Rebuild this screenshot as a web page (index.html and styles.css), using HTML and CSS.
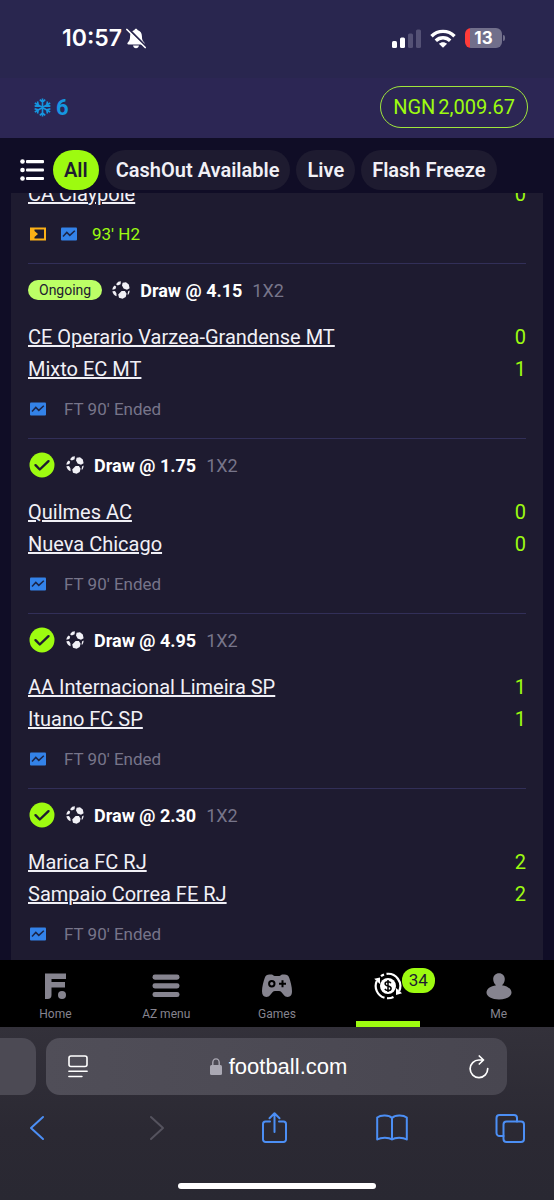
FILE: index.html
```
<!DOCTYPE html>
<html lang="en">
<head>
<meta charset="utf-8">
<meta name="viewport" content="width=device-width, initial-scale=1">
<title>football.com – My bets</title>
<link rel="stylesheet" href="styles.css">
</head>
<body>
<svg class="defs" aria-hidden="true">
  <symbol id="ball" viewBox="0 0 18 18">
    <path fill="currentColor" d="M6.200.7 8.900.2 8.600 3.200 5.800 4.600 4 3.200zM10.600 1.800 14 1.200 16.800 3.600 17.600 7.200 15 8.800 11.600 7.600 10 4.600zM2.800 4.400 4.200 5.700 3.400 8 .4 8.800C.4 7 1.400 5.200 2.800 4.400zM.4 10.200 3 10 4.400 12.200 4.600 15.200C2.200 14.600.6 12.400.4 10.200zM9.600 10 12.900 9.900 14.600 12.800 13.700 16 10.600 17.800 7 16.800 6.200 13.400zM16.200 10.300 17.600 9.600C17.600 11.600 16.900 13.200 15.800 14.200L15.700 12.200z"/>
  </symbol>
  <symbol id="chart" viewBox="0 0 16 14">
    <rect width="16" height="13" y=".5" rx="1" fill="#3382e8"/>
    <path d="M2 9.500 5.800 5.400 8.800 8.400 13.800 3.800" fill="none" stroke="#1c2547" stroke-width="1.500"/>
  </symbol>
  <symbol id="check" viewBox="0 0 26 26">
    <circle cx="13" cy="13" r="12.500" fill="#9dfb10"/>
    <path d="M6.500 13.200l4.300 4.300L19.500 9.200" fill="none" stroke="#1e1b30" stroke-width="2.400" stroke-linecap="round" stroke-linejoin="round"/>
  </symbol>
</svg>

<div class="statusbar">
  <div class="clock">
    <span>10:57</span>
    <svg width="20" height="21" viewBox="0 0 20 21" aria-label="Silent">
      <path fill="#fff" d="M10 .8c-.9 0-1.400.6-1.500 1.200C5.500 2.800 4.200 5.200 4.100 8.100c0 3.200-.7 5-2.300 6.400-.8.8-.5 2 .7 2h15c1.200 0 1.500-1.200.7-2-1.600-1.400-2.300-3.200-2.300-6.400-.1-2.900-1.400-5.300-4.400-6.100C11.400 1.400 10.900.8 10 .8zM7 17.600h6c-.3 1.600-1.400 2.600-3 2.600s-2.700-1-3-2.600z"/>
      <path d="M1.500 0 20 18.500" stroke="#29264f" stroke-width="2.200"/>
      <path d="M.9 1.500 19.200 19.500" stroke="#fff" stroke-width="1.700" stroke-linecap="round"/>
    </svg>
  </div>
  <div class="signals">
    <svg width="29" height="19" viewBox="0 0 29 19" aria-label="Signal">
      <rect x="0" y="12" width="5" height="7" rx="1.500" fill="#fff"/>
      <rect x="8" y="8.500" width="5" height="10.500" rx="1.500" fill="#fff"/>
      <rect x="16" y="4.500" width="5" height="14.500" rx="1.500" fill="#545175"/>
      <rect x="24" y="0.500" width="5" height="18.500" rx="1.500" fill="#545175"/>
    </svg>
    <svg width="26" height="19" viewBox="0 0 26 19" aria-label="Wi-Fi">
      <g fill="none" stroke="#fff" stroke-width="3.400">
        <path d="M1.500 7.200c6.300-6.400 16.700-6.400 23 0"/>
        <path d="M5.800 11.700c4-4 10.400-4 14.400 0"/>
      </g>
      <path fill="#fff" d="M8.900 14.800c2.300-2.200 5.900-2.200 8.200 0L13 18.800z"/>
    </svg>
    <span class="battery">13</span>
  </div>
</div>

<header class="topbar">
  <div class="freeze">
    <svg width="17" height="19" viewBox="0 0 17 19" fill="none" stroke="#1596e0" stroke-width="1.600" aria-hidden="true">
      <path d="M8.500.5v18M.8 5l15.400 9M16.200 5 .8 14M5.800 1.600l2.700 2.600 2.700-2.600M5.800 17.400l2.700-2.600 2.700 2.600M.6 8.200l3.700-1.100-.8-3.600M16.400 10.800l-3.700 1.100.8 3.600M16.400 8.200l-3.700-1.100.8-3.600M.6 10.800l3.700 1.100-.8 3.600"/>
    </svg>
    <span>6</span>
  </div>
  <a class="balance" href="#"><span>NGN</span><span>2,009.67</span></a>
</header>

<nav class="filters" aria-label="Bet filters">
  <button class="list-toggle" aria-label="List view">
    <svg width="24" height="22" viewBox="0 0 24 22" fill="#fff">
      <circle cx="2.500" cy="2.500" r="2.300"/><circle cx="2.500" cy="11" r="2.300"/><circle cx="2.500" cy="19.500" r="2.300"/>
      <rect x="6" y="1" width="18" height="3.200" rx="1"/><rect x="6" y="9.400" width="18" height="3.200" rx="1"/><rect x="6" y="17.900" width="18" height="3.200" rx="1"/>
    </svg>
  </button>
  <button class="chip chip-active">All</button>
  <button class="chip">CashOut Available</button>
  <button class="chip">Live</button>
  <button class="chip">Flash Freeze</button>
</nav>

<main class="panel">
  <div class="bets">
    <section class="bet">
      <div class="team"><a href="#">CA Claypole</a><span>0</span></div>
      <div class="state state-live">
        <svg width="16" height="14" viewBox="0 0 16 14" aria-hidden="true">
          <rect x="1" y="1.500" width="14" height="11" fill="none" stroke="#fbb016" stroke-width="2"/>
          <path d="M1 1h3.500v3L8 7l-3.500 3v3H1z" fill="#fbb016"/>
        </svg>
        <svg width="16" height="14" aria-hidden="true"><use href="#chart"/></svg>
        <span>93' H2</span>
      </div>
    </section>

    <section class="bet">
      <div class="pick"><span class="ongoing">Ongoing</span><svg width="18" height="18" aria-hidden="true"><use href="#ball"/></svg><strong>Draw @ 4.15</strong><span class="market">1X2</span></div>
      <div class="team"><a href="#">CE Operario Varzea-Grandense MT</a><span>0</span></div>
      <div class="team"><a href="#">Mixto EC MT</a><span>1</span></div>
      <div class="state"><svg width="16" height="14" aria-hidden="true"><use href="#chart"/></svg><span>FT 90' Ended</span></div>
    </section>

    <section class="bet">
      <div class="pick"><svg class="won" width="28" height="26" aria-label="Won"><use href="#check"/></svg><svg width="18" height="18" aria-hidden="true"><use href="#ball"/></svg><strong>Draw @ 1.75</strong><span class="market">1X2</span></div>
      <div class="team"><a href="#">Quilmes AC</a><span>0</span></div>
      <div class="team"><a href="#">Nueva Chicago</a><span>0</span></div>
      <div class="state"><svg width="16" height="14" aria-hidden="true"><use href="#chart"/></svg><span>FT 90' Ended</span></div>
    </section>

    <section class="bet">
      <div class="pick"><svg class="won" width="28" height="26" aria-label="Won"><use href="#check"/></svg><svg width="18" height="18" aria-hidden="true"><use href="#ball"/></svg><strong>Draw @ 4.95</strong><span class="market">1X2</span></div>
      <div class="team"><a href="#">AA Internacional Limeira SP</a><span>1</span></div>
      <div class="team"><a href="#">Ituano FC SP</a><span>1</span></div>
      <div class="state"><svg width="16" height="14" aria-hidden="true"><use href="#chart"/></svg><span>FT 90' Ended</span></div>
    </section>

    <section class="bet">
      <div class="pick"><svg class="won" width="28" height="26" aria-label="Won"><use href="#check"/></svg><svg width="18" height="18" aria-hidden="true"><use href="#ball"/></svg><strong>Draw @ 2.30</strong><span class="market">1X2</span></div>
      <div class="team"><a href="#">Marica FC RJ</a><span>2</span></div>
      <div class="team"><a href="#">Sampaio Correa FE RJ</a><span>2</span></div>
      <div class="state"><svg width="16" height="14" aria-hidden="true"><use href="#chart"/></svg><span>FT 90' Ended</span></div>
    </section>
  </div>
</main>

<nav class="tabs" aria-label="Main">
  <a class="tab" href="#">
    <svg width="28" height="28" viewBox="0 0 28 28" fill="currentColor" aria-hidden="true">
      <path d="M4 1.500h21v5.500H10.500v3H24v5.500H10.500V23a4 4 0 0 1-4 4H4z"/><circle cx="21" cy="23" r="4"/>
    </svg>
    <span>Home</span>
  </a>
  <a class="tab" href="#">
    <svg width="28" height="28" viewBox="0 0 28 28" fill="currentColor" aria-hidden="true">
      <rect x=".5" y="2.500" width="27" height="5.200" rx="2.400"/><rect x=".5" y="11.200" width="27" height="5.200" rx="2.400"/><rect x=".5" y="19.900" width="27" height="5.200" rx="2.400"/>
    </svg>
    <span>AZ menu</span>
  </a>
  <a class="tab" href="#">
    <svg width="32" height="28" viewBox="0 0 32 28" aria-hidden="true">
      <path fill="currentColor" d="M8.500 2.500h2.200c1.300 0 1.700 1.500 3 1.500h4.600c1.300 0 1.700-1.500 3-1.500h2.200c2.400 0 3.900 1.100 4.700 3.300C29.500 9.500 31 15 31 19.300c0 3.600-1.600 5.700-4.300 5.700-1.800 0-2.900-.7-4.100-2.200l-2.300-2.700c-.6-.7-1.300-1.100-2.300-1.100h-4c-1 0-1.700.4-2.300 1.100l-2.300 2.700C8.200 24.300 7.100 25 5.300 25 2.600 25 1 22.900 1 19.300 1 15 2.500 9.500 3.800 5.800c.8-2.200 2.300-3.300 4.700-3.300z"/>
      <circle cx="10.800" cy="11.800" r="2.700" fill="none" stroke="#000" stroke-width="2"/>
      <path d="M21.500 8.300v7M18 11.800h7" stroke="#000" stroke-width="2"/>
    </svg>
    <span>Games</span>
  </a>
  <a class="tab tab-active" href="#" aria-label="My bets">
    <span class="coin">
      <svg width="28" height="28" viewBox="0 0 28 28" aria-hidden="true">
        <circle cx="14" cy="14" r="8" fill="#fff"/>
        <g fill="none" stroke="#fff" stroke-width="2.200">
          <path d="M10.500 25.800A12.200 12.200 0 0 1 2.800 9M7 4.200A12.200 12.200 0 0 1 10 2.500M12.500 1.900A12.200 12.200 0 0 1 25.200 19M19.500 24.900a12.200 12.200 0 0 1-6.500 1.300"/>
        </g>
        <path fill="#fff" d="M.2 6.800 6 5.500v6.500zM28 21.200l-6 1.800v-7z"/>
        <path d="M16.900 11.200c-.4-.9-1.500-1.500-2.900-1.500-1.700 0-2.900.8-2.900 2.100 0 3.100 6 1.500 6 4.600 0 1.400-1.300 2.200-3.100 2.200-1.500 0-2.600-.6-3.100-1.700M14 8v12" fill="none" stroke="#000" stroke-width="1.500"/>
      </svg>
      <span class="count">34</span>
    </span>
  </a>
  <a class="tab" href="#">
    <svg width="28" height="28" viewBox="0 0 28 28" fill="currentColor" aria-hidden="true">
      <path d="M14 1.200c3.400 0 5.800 2.600 5.800 5.800 0 2.900-1.300 5.100-2.900 6.300 5.600.8 9.600 3.700 9.600 7.200 0 4.200-5.500 6.900-12.500 6.900S1.500 24.700 1.500 20.500c0-3.500 4-6.400 9.600-7.200C9.500 12.100 8.200 9.900 8.200 7c0-3.200 2.400-5.800 5.800-5.800z"/>
    </svg>
    <span>Me</span>
  </a>
</nav>

<footer class="browser">
  <div class="address-row">
    <div class="prev-tab"></div>
    <div class="address">
      <button class="plain" aria-label="Page menu">
        <svg width="20" height="23" viewBox="0 0 20 23" fill="none" stroke="#fff" stroke-width="1.600" stroke-linecap="round">
          <rect x="1" y="1" width="18" height="10.500" rx="2"/><path d="M.9 16.300h18.200M.9 21.500h13"/>
        </svg>
      </button>
      <span class="site">
        <svg width="12" height="17" viewBox="0 0 12 17" aria-hidden="true"><rect y="7" width="12" height="10" rx="1.500" fill="#aaa8b3"/><path d="M2.800 7.500V4.600a3.200 3.700 0 0 1 6.400 0v2.900" fill="none" stroke="#aaa8b3" stroke-width="1.400"/></svg>
        football.com
      </span>
      <button class="plain" aria-label="Reload">
        <svg width="20" height="24" viewBox="0 0 20 24" fill="none" stroke="#fff" stroke-width="1.700" stroke-linecap="round" stroke-linejoin="round">
          <path d="M18.700 13.500A8.800 8.800 0 1 1 10 5h4M10.300 1l4.200 4-4.200 4"/>
        </svg>
      </button>
    </div>
  </div>
  <div class="toolbar">
    <button class="plain" aria-label="Back"><svg width="34" height="34" viewBox="0 0 34 34"><path d="M23 6 11 17l12 11"/></svg></button>
    <button class="plain forward" aria-label="Forward"><svg width="34" height="34" viewBox="0 0 34 34"><path d="m13 6 12 11-12 11"/></svg></button>
    <button class="plain" aria-label="Share"><svg width="34" height="34" viewBox="0 0 34 34"><path d="M13 10.500H8.500a2.500 2.500 0 0 0-2.500 2.500v15.500A2.500 2.500 0 0 0 8.500 31h18a2.500 2.500 0 0 0 2.500-2.500V13a2.500 2.500 0 0 0-2.500-2.500H22M17.500 21V2.500M12.500 7.200l5-5 5 5"/></svg></button>
    <button class="plain" aria-label="Bookmarks"><svg width="34" height="34" viewBox="0 0 34 34"><path d="M17 7c-3-3-11-3.300-14.800-.5v22C6 26 14 26 17 28.500 20 26 28 26 31.800 28.500v-22C28 3.700 20 4 17 7zv21.500"/></svg></button>
    <button class="plain" aria-label="Tabs"><svg width="34" height="34" viewBox="0 0 34 34"><rect x="10.500" y="10.500" width="20.500" height="20.500" rx="3"/><path d="M10.500 25H6.500a3 3 0 0 1-3-3V7a3 3 0 0 1 3-3h14.500a3 3 0 0 1 3 3v3.500"/></svg></button>
  </div>
  <div class="home-line"></div>
</footer>
</body>
</html>
```
FILE: styles.css
```
* {
  box-sizing: border-box;
}

body {
  margin: 0;
  height: 100vh;
  display: flex;
  flex-direction: column;
  overflow: hidden;
  background: #100d26;
  color: #f1f0f6;
  font-family: Roboto, "Liberation Sans", sans-serif;
}

svg {
  display: block;
  flex: none;
}

a {
  color: inherit;
}

button {
  margin: 0;
  border: 0;
  padding: 0;
  background: none;
  color: inherit;
  font: inherit;
}

.defs {
  position: absolute;
  width: 0;
  height: 0;
}

.statusbar {
  flex: none;
  display: flex;
  align-items: center;
  justify-content: space-between;
  height: 78px;
  padding: 0 52px 2px 62px;
  background: #29264f;
  color: #fff;
  font-family: Inter, sans-serif;
}

.clock {
  display: flex;
  align-items: center;
  gap: 4px;
  font-size: 23px;
  font-weight: 600;
}

.signals {
  display: flex;
  align-items: center;
  gap: 9px;
}

.battery {
  position: relative;
  width: 37px;
  border-radius: 6px;
  background: linear-gradient(90deg, #ff3b39 5px, #716f8b 5px);
  font-size: 17px;
  font-weight: 700;
  line-height: 20px;
  text-align: center;
}

.battery::after {
  content: "";
  position: absolute;
  top: 7px;
  right: -3px;
  width: 2px;
  height: 6px;
  border-radius: 0 2px 2px 0;
  background: #716f8b;
}

.topbar {
  flex: none;
  display: flex;
  align-items: center;
  justify-content: space-between;
  height: 60px;
  padding: 0 26px 2px 34px;
  background: #2c2654;
}

.freeze {
  display: flex;
  align-items: center;
  gap: 5px;
  color: #1596e0;
  font-size: 22px;
  font-weight: 700;
}

.balance {
  display: flex;
  gap: 3px;
  padding: 0 12px;
  border: 1px solid #a0e63c;
  border-radius: 21px;
  color: #9dfb10;
  font-size: 20px;
  line-height: 40px;
  text-decoration: none;
}

.filters {
  flex: none;
  display: flex;
  align-items: center;
  gap: 6px;
  height: 55px;
  padding: 8px 20px 0;
  overflow: hidden;
}

.list-toggle {
  margin-right: 3px;
}

.chip {
  flex: none;
  padding: 0 11px;
  border-radius: 20px;
  background: #1e1b30;
  font-size: 20px;
  font-weight: 600;
  line-height: 40px;
}

.chip-active {
  background: #9dfb10;
  color: #1e1b30;
}

.panel {
  flex: 1;
  min-height: 0;
  margin: 0 11px;
  padding: 0 17px;
  overflow: hidden;
  background: #1e1b30;
}

/* The list sits slightly scrolled beneath the filter bar. */
.bets {
  margin-top: -15px;
}

.bet {
  padding-bottom: 5px;
}

.bet + .bet {
  border-top: 1px solid #322f58;
}

.pick {
  display: flex;
  align-items: center;
  gap: 10px;
  height: 52px;
  margin-bottom: 5px;
  font-size: 18px;
}

.pick strong {
  color: #fff;
  font-weight: 700;
}

.ongoing {
  padding: 0 11px;
  border-radius: 10px;
  background: #bcff66;
  color: #1e1b30;
  font-size: 14px;
  line-height: 20px;
}

.market {
  color: #77758a;
}

.team {
  display: flex;
  justify-content: space-between;
  font-size: 20px;
  line-height: 32px;
}

.team span {
  color: #9dfb10;
}

.state {
  display: flex;
  align-items: center;
  gap: 18px;
  height: 48px;
  padding-left: 2px;
  color: #77758a;
  font-size: 17px;
}

.state-live {
  gap: 15px;
}

.state-live span {
  color: #9dfb10;
}

.tabs {
  flex: none;
  display: flex;
  height: 67px;
  background: #000;
}

.tab {
  flex: 1;
  position: relative;
  display: flex;
  flex-direction: column;
  align-items: center;
  gap: 6px;
  padding-top: 12px;
  color: #86848f;
  font-size: 12px;
  line-height: 16px;
  text-decoration: none;
}

.tab-active::after {
  content: "";
  position: absolute;
  bottom: 0;
  width: 64px;
  height: 6px;
  background: #9dfb10;
}

.coin {
  position: relative;
}

.count {
  position: absolute;
  left: 28px;
  top: -4px;
  padding: 0 7px;
  border-radius: 12px;
  background: #9dfb10;
  color: #1e1b30;
  font-size: 17px;
  line-height: 25px;
}

.browser {
  flex: none;
  padding-top: 11px;
  background: linear-gradient(#33313a, #2b2933 60%, #292832);
  color: #fff;
}

.address-row {
  display: flex;
  gap: 10px;
  height: 57px;
  padding-right: 47px;
}

.prev-tab {
  width: 36px;
  border-radius: 0 14px 14px 0;
  background: #4c4a54;
}

.address {
  flex: 1;
  display: flex;
  align-items: center;
  justify-content: space-between;
  padding: 0 18px 0 22px;
  border-radius: 14px;
  background: linear-gradient(90deg, #504e58, #484650);
}

.site {
  display: flex;
  align-items: center;
  gap: 7px;
  font-family: "Liberation Sans", sans-serif;
  font-size: 22px;
}

.toolbar {
  display: flex;
  justify-content: space-between;
  padding: 16px 27px 0 20px;
}

.toolbar svg {
  fill: none;
  stroke: #4c8ff5;
  stroke-width: 2;
  stroke-linecap: round;
  stroke-linejoin: round;
}

.toolbar .forward svg {
  stroke: #55535e;
}

.home-line {
  width: 198px;
  height: 6px;
  margin: 38px auto 11px;
  border-radius: 3px;
  background: #fff;
}
```
